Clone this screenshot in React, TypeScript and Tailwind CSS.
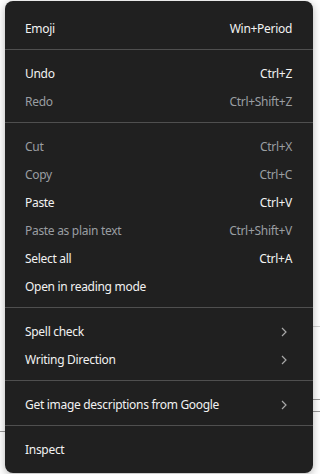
import React from "react";

type Item = { label: string; shortcut?: string; disabled?: boolean; sub?: boolean };

const groups: Item[][] = [
  [{ label: "Emoji", shortcut: "Win+Period" }],
  [
    { label: "Undo", shortcut: "Ctrl+Z" },
    { label: "Redo", shortcut: "Ctrl+Shift+Z", disabled: true },
  ],
  [
    { label: "Cut", shortcut: "Ctrl+X", disabled: true },
    { label: "Copy", shortcut: "Ctrl+C", disabled: true },
    { label: "Paste", shortcut: "Ctrl+V" },
    { label: "Paste as plain text", shortcut: "Ctrl+Shift+V", disabled: true },
    { label: "Select all", shortcut: "Ctrl+A" },
    { label: "Open in reading mode" },
  ],
  [
    { label: "Spell check", sub: true },
    { label: "Writing Direction", sub: true },
  ],
  [{ label: "Get image descriptions from Google", sub: true }],
  [{ label: "Inspect" }],
];

function Chevron() {
  return (
    <svg width="6" height="10" viewBox="0 0 6 10" className="mr-[5px]">
      <path d="M1 1 L5 5 L1 9" fill="none" stroke="#a8a8a8" strokeWidth="1.2" />
    </svg>
  );
}

export default function App() {
  return (
    <div
      className="relative w-[320px] h-[474px] bg-white overflow-hidden"
      style={{ fontFamily: '"Noto Sans", "Open Sans", sans-serif' }}
    >
      {/* backdrop fragments */}
      <div className="absolute left-[313px] right-0 top-[326px] h-px bg-[#d4d4d4]" />
      <div className="absolute left-[313px] right-0 top-[399px] h-px bg-[#9a9a9a]" />
      <div className="absolute left-[313px] right-0 top-[411px] h-px bg-[#9a9a9a]" />
      <div className="absolute left-0 w-[5px] top-[431px] h-px bg-[#9a9a9a]" />

      <div className="absolute left-[5px] top-[1px] w-[308px] h-[472px] rounded-[8px] bg-[#202020] pt-[12px] pb-[11px] shadow-[0_2px_8px_rgba(0,0,0,0.3)]">
        {groups.map((g, gi) => (
          <div key={gi}>
            {gi > 0 && <div className="my-[8px] h-px bg-[#4f4f4f]" />}
            {g.map((it) => (
              <div
                key={it.label}
                className={`flex h-[28px] items-center justify-between pl-[20px] pr-[21px] pt-[4px] text-[12px] tracking-[-0.3px] ${
                  it.disabled ? "text-[#9a9ea2]" : "text-[#f2f2f2]"
                }`}
              >
                <span>{it.label}</span>
                {it.shortcut && <span>{it.shortcut}</span>}
                {it.sub && <Chevron />}
              </div>
            ))}
          </div>
        ))}
      </div>
    </div>
  );
}
